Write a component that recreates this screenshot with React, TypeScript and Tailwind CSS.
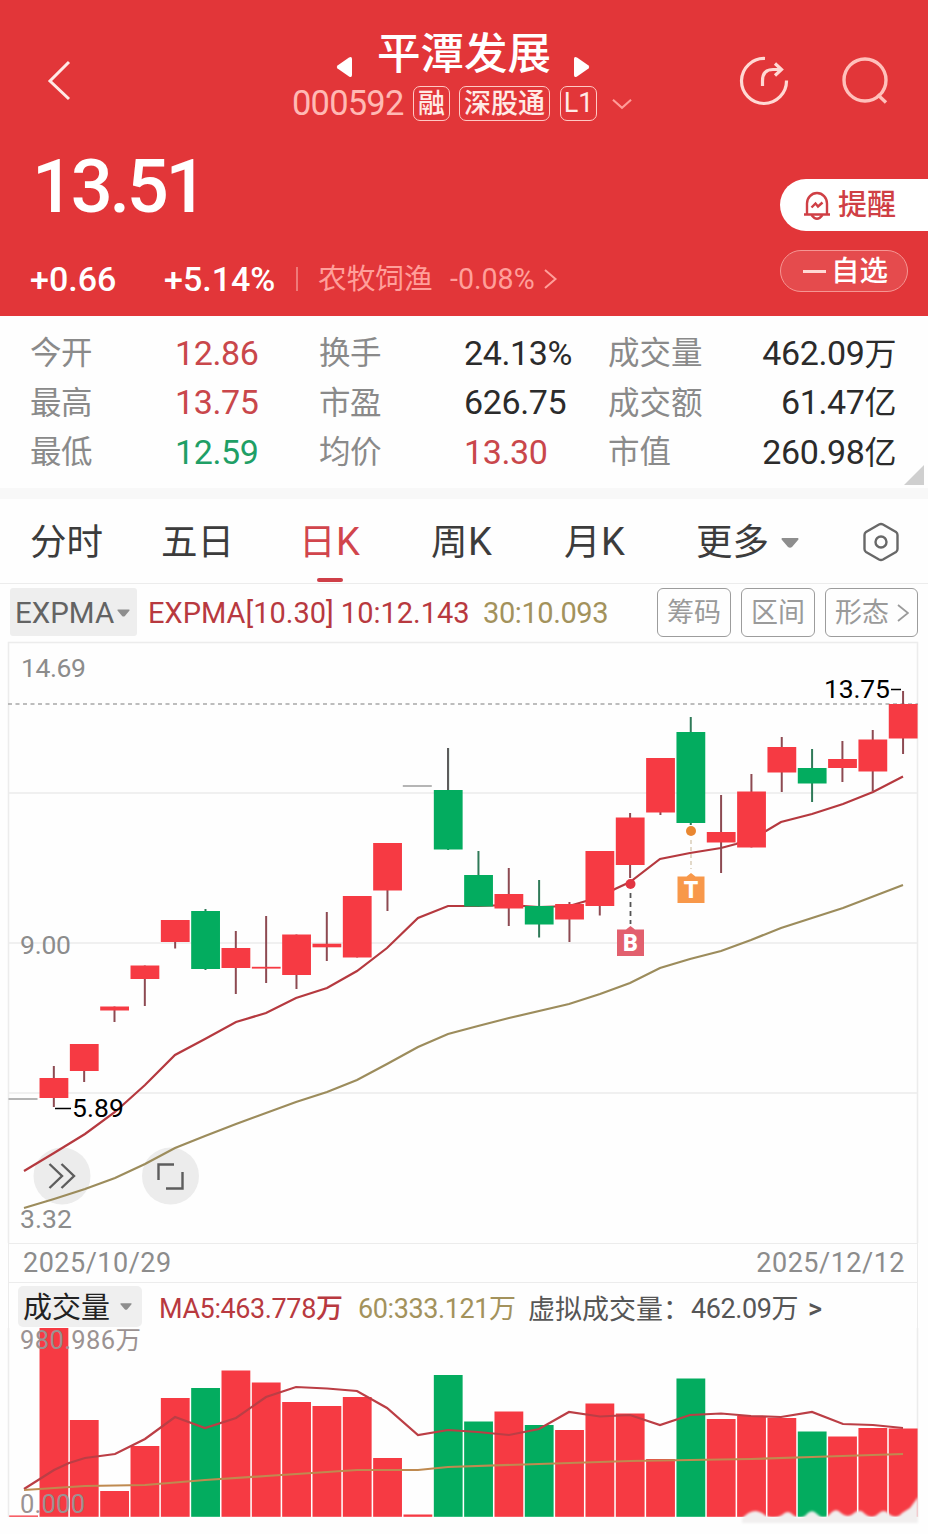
import type { ReactNode } from 'react'

const RED = '#f63a43'
const GREEN = '#03ac5f'
const STEP = 30.33
const cx = (i: number) => 23.5 + STEP * i

type Bar = { top: number; bottom: number; high: number; low: number; vol: number; up: boolean }
type FlatBar = { flat: number; vol: number }

const bar = (top: number, bottom: number, high: number, low: number, vol: number, up = true): Bar => ({
  top,
  bottom,
  high,
  low,
  vol,
  up,
})

const BARS: (Bar | FlatBar)[] = [
  { flat: 1099, vol: 1515.5 },
  bar(1078, 1098, 1066, 1107, 1328),
  bar(1044, 1071, 1044, 1082, 1420),
  bar(1006.5, 1010.5, 1006.5, 1022, 1491),
  bar(965.5, 979, 965.5, 1006, 1446),
  bar(920, 942, 920, 948.5, 1398),
  bar(911, 969, 909, 970, 1388, false),
  bar(948, 968, 931, 994, 1370.5),
  bar(966.8, 968.6, 916, 983, 1382.5),
  bar(934.5, 975, 934.5, 989, 1402),
  bar(943.7, 947.3, 912, 961, 1406),
  bar(896, 957.5, 896, 957.5, 1397),
  bar(843, 890.5, 843, 911, 1458),
  { flat: 786, vol: 1514.5 },
  bar(790, 849.5, 748, 850, 1375, false),
  bar(875, 906.5, 851, 906.5, 1421.5, false),
  bar(894, 908.5, 868, 926, 1411.5),
  bar(906, 924.5, 880, 937.5, 1425, false),
  bar(904, 919.5, 902, 942, 1430),
  bar(851, 906, 851, 915.5, 1403.5),
  bar(817.5, 865, 813, 878, 1413.5),
  bar(758, 812.5, 758, 815, 1459),
  bar(732, 823, 717, 825, 1378.5, false),
  bar(832, 842.5, 795, 873, 1419),
  bar(791.5, 847.5, 774, 847.5, 1416),
  bar(747, 772.5, 737, 792, 1418),
  bar(768, 783.5, 749, 802, 1431.5, false),
  bar(759, 768, 741, 782, 1436.5),
  bar(739.5, 771.5, 730, 791, 1428),
  bar(704, 738.5, 691, 754, 1428.5),
]

const EXPMA_10 =
  '24,1171 54,1153 85,1134 115,1112 145,1085 175,1055 205,1039 236,1022 266,1013 296,998 327,988 357,971 387,948 418,918 448,906 478,906 509,905 539,907 569,906 600,897 615,889 630,882 660,859 690,853 721,848 736,844 766,831 781,822 812,814 843,804 873,792 903,776.5'
const EXPMA_30 =
  '24,1208 54,1199 85,1189 115,1178 145,1164 175,1148 205,1136 236,1124 296,1102 327,1092 357,1080 387,1064 418,1047 448,1034 478,1026 509,1018 569,1004 600,994 630,983 660,968 690,959 721,951 751,940 781,928 843,908 903,885'
const VOL_MA5 =
  '24,1489 54,1470 69,1463 85,1458 115,1454 145,1439 175,1417 205,1428 236,1418 266,1397 296,1387 327,1388.5 357,1391 387,1408 418,1435 448,1430 478,1432 509,1435 539,1429 569,1412 600,1416.5 630,1415 660,1425 690,1415 721,1413.5 751,1416 781,1417 812,1412 843,1424 873,1425 903,1428'
const VOL_MA60 =
  '24,1490 85,1486 145,1485 205,1480 266,1476 327,1472 357,1470 418,1470 448,1467 539,1464 630,1461 751,1459 812,1457 903,1454'

function Tag({ children, className }: { children: string; className: string }) {
  return (
    <span
      className={`flex h-[35px] items-center justify-center rounded-[7px] border-[1.5px] border-[#ffc9c4] text-[27px] leading-none text-[#ffeae6] ${className}`}
    >
      {children}
    </span>
  )
}

function Header() {
  return (
    <header className="flex h-[316px] flex-col bg-[#e23639] text-white">
      <div className="flex h-[140px] pt-[26px]">
        <svg className="mt-[34px] ml-[45px] h-[42px] w-[28px] shrink-0" viewBox="0 0 28 42" fill="none" stroke="#ffe9e6" strokeWidth="3">
          <path d="M24 2 L5 21 L24 39" />
        </svg>
        <div className="ml-[218px] flex w-[346px] shrink-0 flex-col">
          <div className="flex h-[54px] items-center pl-[45px]">
            <svg className="mt-[28px] h-[22px] w-[16px]" viewBox="0 0 16 22" fill="#fff">
              <path d="M1.5 9.5 L13 1.5 Q16 0 16 3 V19 Q16 22 13 20.5 L1.5 12.5 Q0 11 1.5 9.5Z" />
            </svg>
            <h1 className="ml-[25px] pt-[4px] text-[43.5px] leading-none font-medium whitespace-nowrap">平潭发展</h1>
            <svg className="mt-[28px] ml-[23px] h-[22px] w-[16px]" viewBox="0 0 16 22" fill="#fff">
              <path d="M14.5 9.5 L3 1.5 Q0 0 0 3 V19 Q0 22 3 20.5 L14.5 12.5 Q16 11 14.5 9.5Z" />
            </svg>
          </div>
          <div className="mt-[6px] flex items-center">
            <span className="w-[122px] pl-[1px] text-[34.5px] leading-[35px] tracking-[-0.8px] text-[#ffb9b4]">000592</span>
            <Tag className="w-[37px] pt-[2px] font-medium">融</Tag>
            <Tag className="ml-[9px] w-[91px] pt-[2px] font-medium">深股通</Tag>
            <Tag className="ml-[10px] w-[37px]">L1</Tag>
            <svg className="ml-[15px] h-[12px] w-[20px]" viewBox="0 0 21 12" fill="none" stroke="#ff9c98" strokeWidth="2.2">
              <path d="M1 1.5 L10.5 10 L20 1.5" />
            </svg>
          </div>
        </div>
        <svg className="mt-[29px] ml-[101px] h-[52px] w-[52px] shrink-0" viewBox="0 0 52 52" fill="none" stroke="#ffd9d4" strokeWidth="3.2">
          <path d="M27 3.5 A22.5 22.5 0 1 0 48.5 25.5" />
          <path d="M24.5 31 V26 Q24.5 14.5 35 14.5 H43" />
          <path d="M37 8.5 L43.5 14.5 L37 20.5" />
        </svg>
        <svg className="mt-[29px] ml-[49px] h-[52px] w-[52px] shrink-0" viewBox="0 0 52 52" fill="none" stroke="#ffc0bb" strokeWidth="3.4">
          <circle cx="26" cy="25" r="21" />
          <path d="M38.5 39.5 L47 47.5" />
        </svg>
      </div>
      <div className="flex justify-between">
        <div className="flex flex-col">
          <div className="mt-[7px] ml-[32px] h-[78px] text-[74px] leading-[79px] font-medium tracking-[-3.3px]">13.51</div>
          <div className="mt-[36px] ml-[30px] flex h-[36px] items-center text-[34px] leading-none font-medium">
            <span className="w-[134px]">+0.66</span>
            <span className="w-[132px]">+5.14%</span>
            <span className="h-[24px] w-[2px] bg-[#ef7a78]" />
            <span className="ml-[20px] w-[132px] pt-[1px] text-[28.7px] font-normal text-[#ff9f9a]">农牧饲渔</span>
            <span className="w-[94px] text-[28.6px] font-normal text-[#ff9f9a]">-0.08%</span>
            <svg className="h-[20px] w-[14px]" viewBox="0 0 14 20" fill="none" stroke="#ff9f9a" strokeWidth="2">
              <path d="M1 1 L11.5 10 L1 19" />
            </svg>
          </div>
        </div>
        <div className="mt-[39px] flex flex-col">
          <button className="flex h-[52px] w-[148px] items-center rounded-l-full bg-white pl-[23px] text-[29px] leading-none text-[#cf3f45]">
            <svg className="mt-[2px] mr-[7px] h-[30px] w-[28px] shrink-0" viewBox="0 0 28 30" fill="none" stroke="#cf3f45" strokeWidth="2.4">
              <path d="M1 23.5 H27 M4 23.5 V12.5 A10 10.5 0 0 1 24 12.5 V23.5" />
              <path d="M8.5 16.5 L12.5 12.5 L15 15.5 L19.5 11.5" />
              <path d="M8.5 24 Q14 31.5 19.5 24" />
            </svg>
            <span className="pt-[1px] font-medium">提醒</span>
          </button>
          <button className="mt-[19px] flex h-[42px] w-[128px] items-center rounded-full border-[1.5px] border-[#f59693] bg-[#e54b4d] pl-[22px] text-[28.5px] leading-none font-medium">
            <span className="mr-[5px] h-[3px] w-[23px] bg-[#ffd9d4]" />
            <span className="pt-[2px]">自选</span>
          </button>
        </div>
      </div>
    </header>
  )
}

const STATS = [
  ['今开', '12.86', 'text-[#c9474b]', '换手', '24.13%', 'text-[#2b2b2b]', '成交量', '462.09万'],
  ['最高', '13.75', 'text-[#c9474b]', '市盈', '626.75', 'text-[#2b2b2b]', '成交额', '61.47亿'],
  ['最低', '12.59', 'text-[#1f9f66]', '均价', '13.30', 'text-[#c9474b]', '市值', '260.98亿'],
]

function StatLabel({ children, className }: { children: string; className?: string }) {
  return <span className={`pt-[2px] text-[31.5px] font-normal text-[#8a8a8a] ${className ?? ''}`}>{children}</span>
}

function Stats() {
  return (
    <section className="flex h-[172px] flex-col pt-[12px] pl-[30px]">
      {STATS.map(([l1, v1, c1, l2, v2, c2, l3, v3], i) => (
        <div key={l1} className="flex h-[49.5px] items-center text-[34px] leading-none font-[450] tracking-[-0.4px]">
          <StatLabel className="w-[145px]">{l1}</StatLabel>
          <span className={`w-[144px] ${c1}`}>{v1}</span>
          <StatLabel className="w-[145px]">{l2}</StatLabel>
          <span className={`w-[144px] ${c2}`}>{v2}</span>
          <StatLabel className="tracking-normal">{l3}</StatLabel>
          <span className="ml-auto flex items-center text-[#2b2b2b]">
            {v3.slice(0, -1)}
            <span className="pt-[2px] text-[32px] font-normal">{v3.slice(-1)}</span>
          </span>
          <span className="flex h-full w-[32px] items-end">
            {i === 2 && (
              <svg className="-mb-[8px] ml-[8px] h-[20px] w-[20px]" viewBox="0 0 20 20" fill="#cfcfcf">
                <path d="M20 0 V20 H0Z" />
              </svg>
            )}
          </span>
        </div>
      ))}
    </section>
  )
}

function Caret({ className }: { className: string }) {
  return (
    <svg className={className} viewBox="0 0 18 10" fill="#8e8e8e">
      <path d="M1 0 H17 Q18 1 17 2 L11 9 Q9 10.5 7 9 L1 2 Q0 1 1 0Z" />
    </svg>
  )
}

function Tabs() {
  return (
    <nav className="flex h-[85px] items-stretch border-b border-[#ececec] pl-[30px] text-[36.5px] leading-[87px] text-[#3c3c3c]">
      <span className="w-[131px]">分时</span>
      <span className="w-[138px]">五日</span>
      <span className="flex w-[132px] flex-col text-[#d1454c]">
        <span className="h-[79px] tracking-[0.5px]">
          日<span className="text-[38px]">K</span>
        </span>
        <span className="ml-[18px] h-[4px] w-[26px] rounded-full bg-[#cf3f48]" />
      </span>
      <span className="w-[133px] tracking-[0.5px]">
        周<span className="text-[38px]">K</span>
      </span>
      <span className="w-[132px] tracking-[0.5px]">
        月<span className="text-[38px]">K</span>
      </span>
      <span className="w-[85px]">更多</span>
      <Caret className="mt-[39px] h-[10px] w-[18px]" />
      <svg className="mt-[23px] ml-[63px] h-[40px] w-[38px]" viewBox="0 0 38 40" fill="none" stroke="#686868" strokeWidth="2.4">
        <path d="M17 2.5 Q19 1.5 21 2.5 L34 10 Q35.5 11 35.5 13 V27 Q35.5 29 34 30 L21 37.5 Q19 38.5 17 37.5 L4 30 Q2.5 29 2.5 27 V13 Q2.5 11 4 10Z" />
        <circle cx="19" cy="20" r="5.5" />
      </svg>
    </nav>
  )
}

function ToolButton({ children, className }: { children: ReactNode; className: string }) {
  return (
    <button
      className={`flex h-[49px] items-center rounded-[6px] border-[1.5px] border-[#9c9c9c] pt-[2px] pl-[9px] text-[27px] leading-none text-[#9a9a9a] ${className}`}
    >
      {children}
    </button>
  )
}

function IndicatorBar() {
  return (
    <div className="flex h-[57px] pt-[4px] pl-[10px]">
      <button className="flex h-[48px] w-[127px] items-center rounded-[3px] bg-[#eeeeee] pt-[3px] pl-[5px] text-[29.5px] leading-none text-[#636363]">
        EXPMA
        <Caret className="mb-[2px] ml-[3px] h-[8px] w-[13px]" />
      </button>
      <div className="ml-[11px] flex h-[48px] w-[509px] items-center pt-[3px] text-[29px] leading-none whitespace-nowrap">
        <span className="w-[335px] font-[450] text-[#b8393f]">EXPMA[10.30] 10:12.143</span>
        <span className="tracking-[-0.4px] text-[#a3925c]">30:10.093</span>
      </div>
      <ToolButton className="w-[74px]">筹码</ToolButton>
      <ToolButton className="ml-[10px] w-[74px]">区间</ToolButton>
      <ToolButton className="ml-[10px] w-[93px]">
        形态
        <svg className="mb-[2px] ml-[8px] h-[18px] w-[12px]" viewBox="0 0 12 18" fill="none" stroke="#9a9a9a" strokeWidth="1.8">
          <path d="M1 1 L11 9 L1 17" />
        </svg>
      </ToolButton>
    </div>
  )
}

function PriceChart() {
  return (
    <svg className="block h-[602px] w-[928px]" viewBox="0 641 928 602" fontFamily="Roboto, sans-serif">
      <g stroke="#ececec" strokeWidth="1.5" fill="none">
        <path d="M8.5 1243 V642.5 H917.5 V1243" />
        <path d="M8 793 H918 M8 943 H918 M8 1093 H918" />
      </g>
      <path d="M8 704 H918" stroke="#a8a8a8" strokeWidth="1.5" strokeDasharray="4 3.5" />
      <circle cx="62" cy="1176" r="28.5" fill="#ececec" />
      <circle cx="170.5" cy="1176" r="28.5" fill="#ececec" />
      <polyline points={EXPMA_10} fill="none" stroke="#b5393f" strokeWidth="2.2" />
      <polyline points={EXPMA_30} fill="none" stroke="#9c8c5c" strokeWidth="2.2" />
      {BARS.map((b, i) =>
        'flat' in b ? (
          <path key={i} d={`M${cx(i) - 15} ${b.flat} h29`} stroke="#9d9d9d" strokeWidth="1.5" />
        ) : (
          <g key={i}>
            <path d={`M${cx(i)} ${b.high} V${b.low}`} stroke={b.up ? '#8d4a52' : '#2f7a58'} strokeWidth="2" />
            <rect x={cx(i) - 14.3} y={b.top} width="28.8" height={b.bottom - b.top} fill={b.up ? RED : GREEN} />
          </g>
        ),
      )}
      <path d="M448 748 V790" stroke="#5c5c5c" strokeWidth="2" />

      {/* buy / trade markers */}
      <circle cx="630.5" cy="884" r="5" fill="#e23542" />
      <path d="M630.5 893 V924" stroke="#555" strokeWidth="1.8" strokeDasharray="5 4" />
      <path d="M617 929.5 H626 L630.5 926 L635 929.5 H644 V956 H617Z" fill="#e2606e" />
      <text x="630.5" y="951" fontSize="23" fontWeight="900" fill="#fff" textAnchor="middle">B</text>
      <circle cx="691" cy="831" r="5" fill="#e98731" />
      <path d="M691 840 V869" stroke="#d9cdb8" strokeWidth="1.5" strokeDasharray="4 3" />
      <path d="M677.5 876.5 H686.5 L691 873 L695.5 876.5 H704.5 V903 H677.5Z" fill="#f8984a" />
      <text x="691" y="898" fontSize="23" fontWeight="900" fill="#fff" textAnchor="middle">T</text>

      <g fill="none" stroke="#5d5d5d" strokeWidth="2.4">
        <path d="M49.5 1164 L62 1176 L49.5 1188 M61.5 1164 L74 1176 L61.5 1188" />
        <path d="M158.5 1180 V1164.5 H174 M182.5 1172 V1188.5 H166" />
      </g>

      <g fontSize="26.5" fill="#8c8c8c">
        <text x="21" y="677" textLength="65">14.69</text>
        <text x="20" y="954" textLength="51">9.00</text>
        <text x="20" y="1228" textLength="52">3.32</text>
      </g>
      <g fontSize="26.5" fontWeight="450" fill="#000">
        <text x="824" y="698" textLength="66">13.75</text>
        <text x="72" y="1117" textLength="52">5.89</text>
      </g>
      <path d="M55 1108.5 H71 M891 689.5 H901" stroke="#000" strokeWidth="1.7" />
    </svg>
  )
}

function VolumePanel() {
  return (
    <>
      <div className="mr-[10px] ml-[8px] flex h-[40px] items-center justify-between border-[1.5px] border-[#ececec] pr-[12px] pl-[14px] text-[27px] leading-none tracking-[0.5px] text-[#8c8c8c]">
        <span>2025/10/29</span>
        <span>2025/12/12</span>
      </div>
      <div className="mr-[10px] ml-[8px] flex h-[45px] items-start border-x-[1.5px] border-[#ececec] pt-[3px] pl-[9px] text-[27px] leading-none whitespace-nowrap">
        <button className="flex h-[41px] w-[124px] items-center rounded-[5px] bg-[#efefef] pl-[5px] text-[29px] text-[#222]">
          <span className="pt-[3px]">成交量</span>
          <Caret className="ml-[10px] h-[9px] w-[12px]" />
        </button>
        <div className="flex h-[45px] items-center pt-[2px] pl-[17px] tracking-[-0.4px]">
          <span className="w-[199px] font-[450] text-[#b8393f]">MA5:463.778万</span>
          <span className="w-[170px] text-[#a3925c]">60:333.121万</span>
          <span className="w-[163px] pt-[1px] tracking-normal text-[#565656]">虚拟成交量：</span>
          <span className="w-[117px] text-[#565656]">462.09万</span>
          <span className="font-medium text-[#565656]">&gt;</span>
        </div>
      </div>
      <svg
        className="block h-[206px] w-[928px] overflow-visible"
        viewBox="0 1328 928 206"
        fontFamily="Roboto, 'Noto Sans CJK SC', sans-serif"
      >
        <defs>
          <filter id="soft" x="-10%" y="-30%" width="120%" height="160%">
            <feGaussianBlur stdDeviation="1.2" />
          </filter>
        </defs>
        <path d="M8.5 1328 V1517 M917.5 1328 V1517" stroke="#ececec" strokeWidth="1.5" />
        {BARS.map((b, i) => (
          <rect
            key={i}
            x={cx(i) - 14.3}
            y={b.vol}
            width="28.8"
            height={1516.8 - b.vol}
            fill={'flat' in b || b.up ? RED : GREEN}
          />
        ))}
        <polyline points={VOL_MA5} fill="none" stroke="#bb3e45" strokeWidth="2.2" />
        <polyline points={VOL_MA60} fill="none" stroke="#bf8a50" strokeWidth="2.2" />
        <g fontSize="25.5" fill="#9b9292">
          <text x="20" y="1348.5" textLength="121">980.986万</text>
          <text x="20" y="1513" textLength="65">0.000</text>
        </g>
        <path
          d="M742 1519 Q748 1511 756 1511 Q762 1512 766 1516 Q774 1520 782 1515 Q788 1509 793 1515 Q800 1521 806 1515 Q812 1508 817 1514 Q824 1521 830 1514 Q836 1507 841 1513 Q848 1519 854 1513 Q860 1508 865 1514 Q872 1520 878 1514 Q884 1508 889 1514 Q896 1520 902 1513 L910 1508 L918 1497 V1523 H742Z"
          fill="#f1efef"
          filter="url(#soft)"
        />
      </svg>
    </>
  )
}

export default function App() {
  return (
    <div className="w-[928px] bg-[#fefefe] font-['Roboto','Noto_Sans_CJK_SC',sans-serif]">
      <Header />
      <Stats />
      <div className="h-[11px] bg-[#f8f8f8]" />
      <Tabs />
      <IndicatorBar />
      <PriceChart />
      <VolumePanel />
    </div>
  )
}
